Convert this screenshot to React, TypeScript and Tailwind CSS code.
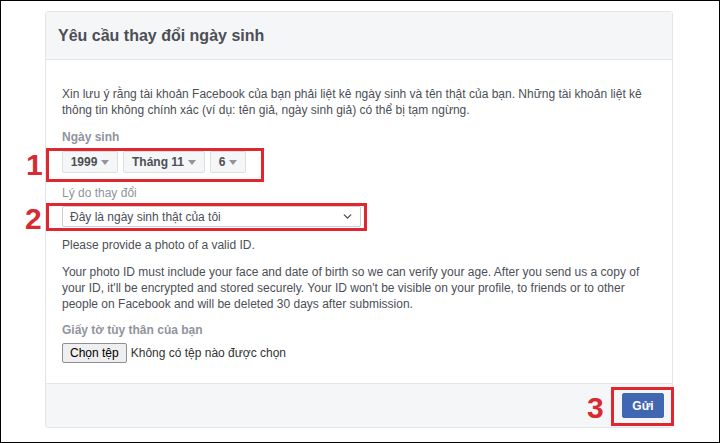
import { ChevronDown } from 'lucide-react';

const font = { fontFamily: '"Liberation Sans", Arial, sans-serif' };

function Caret() {
    return (
        <svg width="8" height="5" viewBox="0 0 8 5" className="ml-[4px]">
            <path d="M0 0 L8 0 L4 5 Z" fill="#90949c" />
        </svg>
    );
}

function DateSelect({ label, width }: { label: string; width: string }) {
    return (
        <div className={`${width} h-[22px] flex items-center justify-center bg-[#f5f6f7] border border-[#dddfe2] rounded-[2px] text-[12px] font-bold text-[#4b4f56]`}>
            {label}
            <Caret />
        </div>
    );
}

export default function App() {
    return (
        <div className="relative w-[720px] h-[443px] bg-white border border-black box-border overflow-hidden" style={font}>
            <div className="ml-[44px] mt-[10px] w-[628px] h-[417px] border border-[#e3e5e8] rounded-[3px] flex flex-col bg-white">
                {/* Header */}
                <div className="h-[48px] shrink-0 bg-[#f5f6f7] border-b border-[#e5e5e5] flex items-center pl-[12px]">
                    <h2 className="text-[16px] font-bold text-[#4b4f56] leading-none">Yêu cầu thay đổi ngày sinh</h2>
                </div>

                {/* Body */}
                <div className="flex-1 px-[16px] pt-[26px] text-[12px] leading-[16px] text-[#4b4f56]">
                    <p>
                        Xin lưu ý rằng tài khoản Facebook của bạn phải liệt kê ngày sinh và tên thật của bạn. Những tài khoản liệt kê thông tin không chính xác (ví dụ: tên giả, ngày sinh giả) có thể bị tạm ngừng.
                    </p>

                    <div className="mt-[11px] font-bold text-[#90949c]">Ngày sinh</div>
                    <div className="mt-[6px] flex gap-[5px]">
                        <DateSelect label="1999" width="w-[56px]" />
                        <DateSelect label="Tháng 11" width="w-[82px]" />
                        <DateSelect label="6" width="w-[36px]" />
                    </div>

                    <div className="mt-[12px] text-[#90949c]">Lý do thay đổi</div>
                    <div className="mt-[5px] w-[299px] h-[21px] border border-[#ccd0d5] rounded-[2px] bg-white flex items-center justify-between pl-[7px] pr-[6px]">
                        <span>Đây là ngày sinh thật của tôi</span>
                        <ChevronDown size={13} strokeWidth={2.5} className="text-[#4b4f56]" />
                    </div>

                    <p className="mt-[10px]">Please provide a photo of a valid ID.</p>
                    <p className="mt-[11px]">
                        Your photo ID must include your face and date of birth so we can verify your age. After you send us a copy of your ID, it'll be encrypted and stored securely. Your ID won't be visible on your profile, to friends or to other people on Facebook and will be deleted 30 days after submission.
                    </p>

                    <div className="mt-[10px] font-bold text-[#90949c]">Giấy tờ tùy thân của bạn</div>
                    <div className="mt-[5px] flex items-center gap-[4px] text-[12px] text-[#333]">
                        <span className="h-[20px] px-[7px] flex items-center border border-[#8f8f8f] rounded-[2px] bg-[#efefef] text-black">Chọn tệp</span>
                        <span>Không có tệp nào được chọn</span>
                    </div>
                </div>

                {/* Footer */}
                <div className="h-[44px] shrink-0 bg-[#f5f6f7] border-t border-[#e5e5e5] flex items-center justify-end pr-[8px]">
                    <button className="w-[42px] h-[25px] rounded-[2px] bg-[#4267b2] border border-[#4267b2] text-white text-[12px] font-bold">
                        Gửi
                    </button>
                </div>
            </div>

            {/* Annotations */}
            <div className="absolute left-[45px] top-[147px] w-[218px] h-[34px] border-[3px] border-[#e0262f]" />
            <div className="absolute left-[45px] top-[202px] w-[321px] h-[28px] border-[3px] border-[#e0262f]" />
            <div className="absolute left-[610px] top-[386px] w-[63px] h-[39px] border-[3px] border-[#e0262f]" />
            <span className="absolute left-[25px] top-[147px] text-[30px] font-bold text-[#d92a30] leading-[34px]">1</span>
            <span className="absolute left-[24px] top-[201px] text-[30px] font-bold text-[#d92a30] leading-[34px]">2</span>
            <span className="absolute left-[586px] top-[390px] text-[30px] font-bold text-[#d92a30] leading-[34px]">3</span>
        </div>
    );
}
